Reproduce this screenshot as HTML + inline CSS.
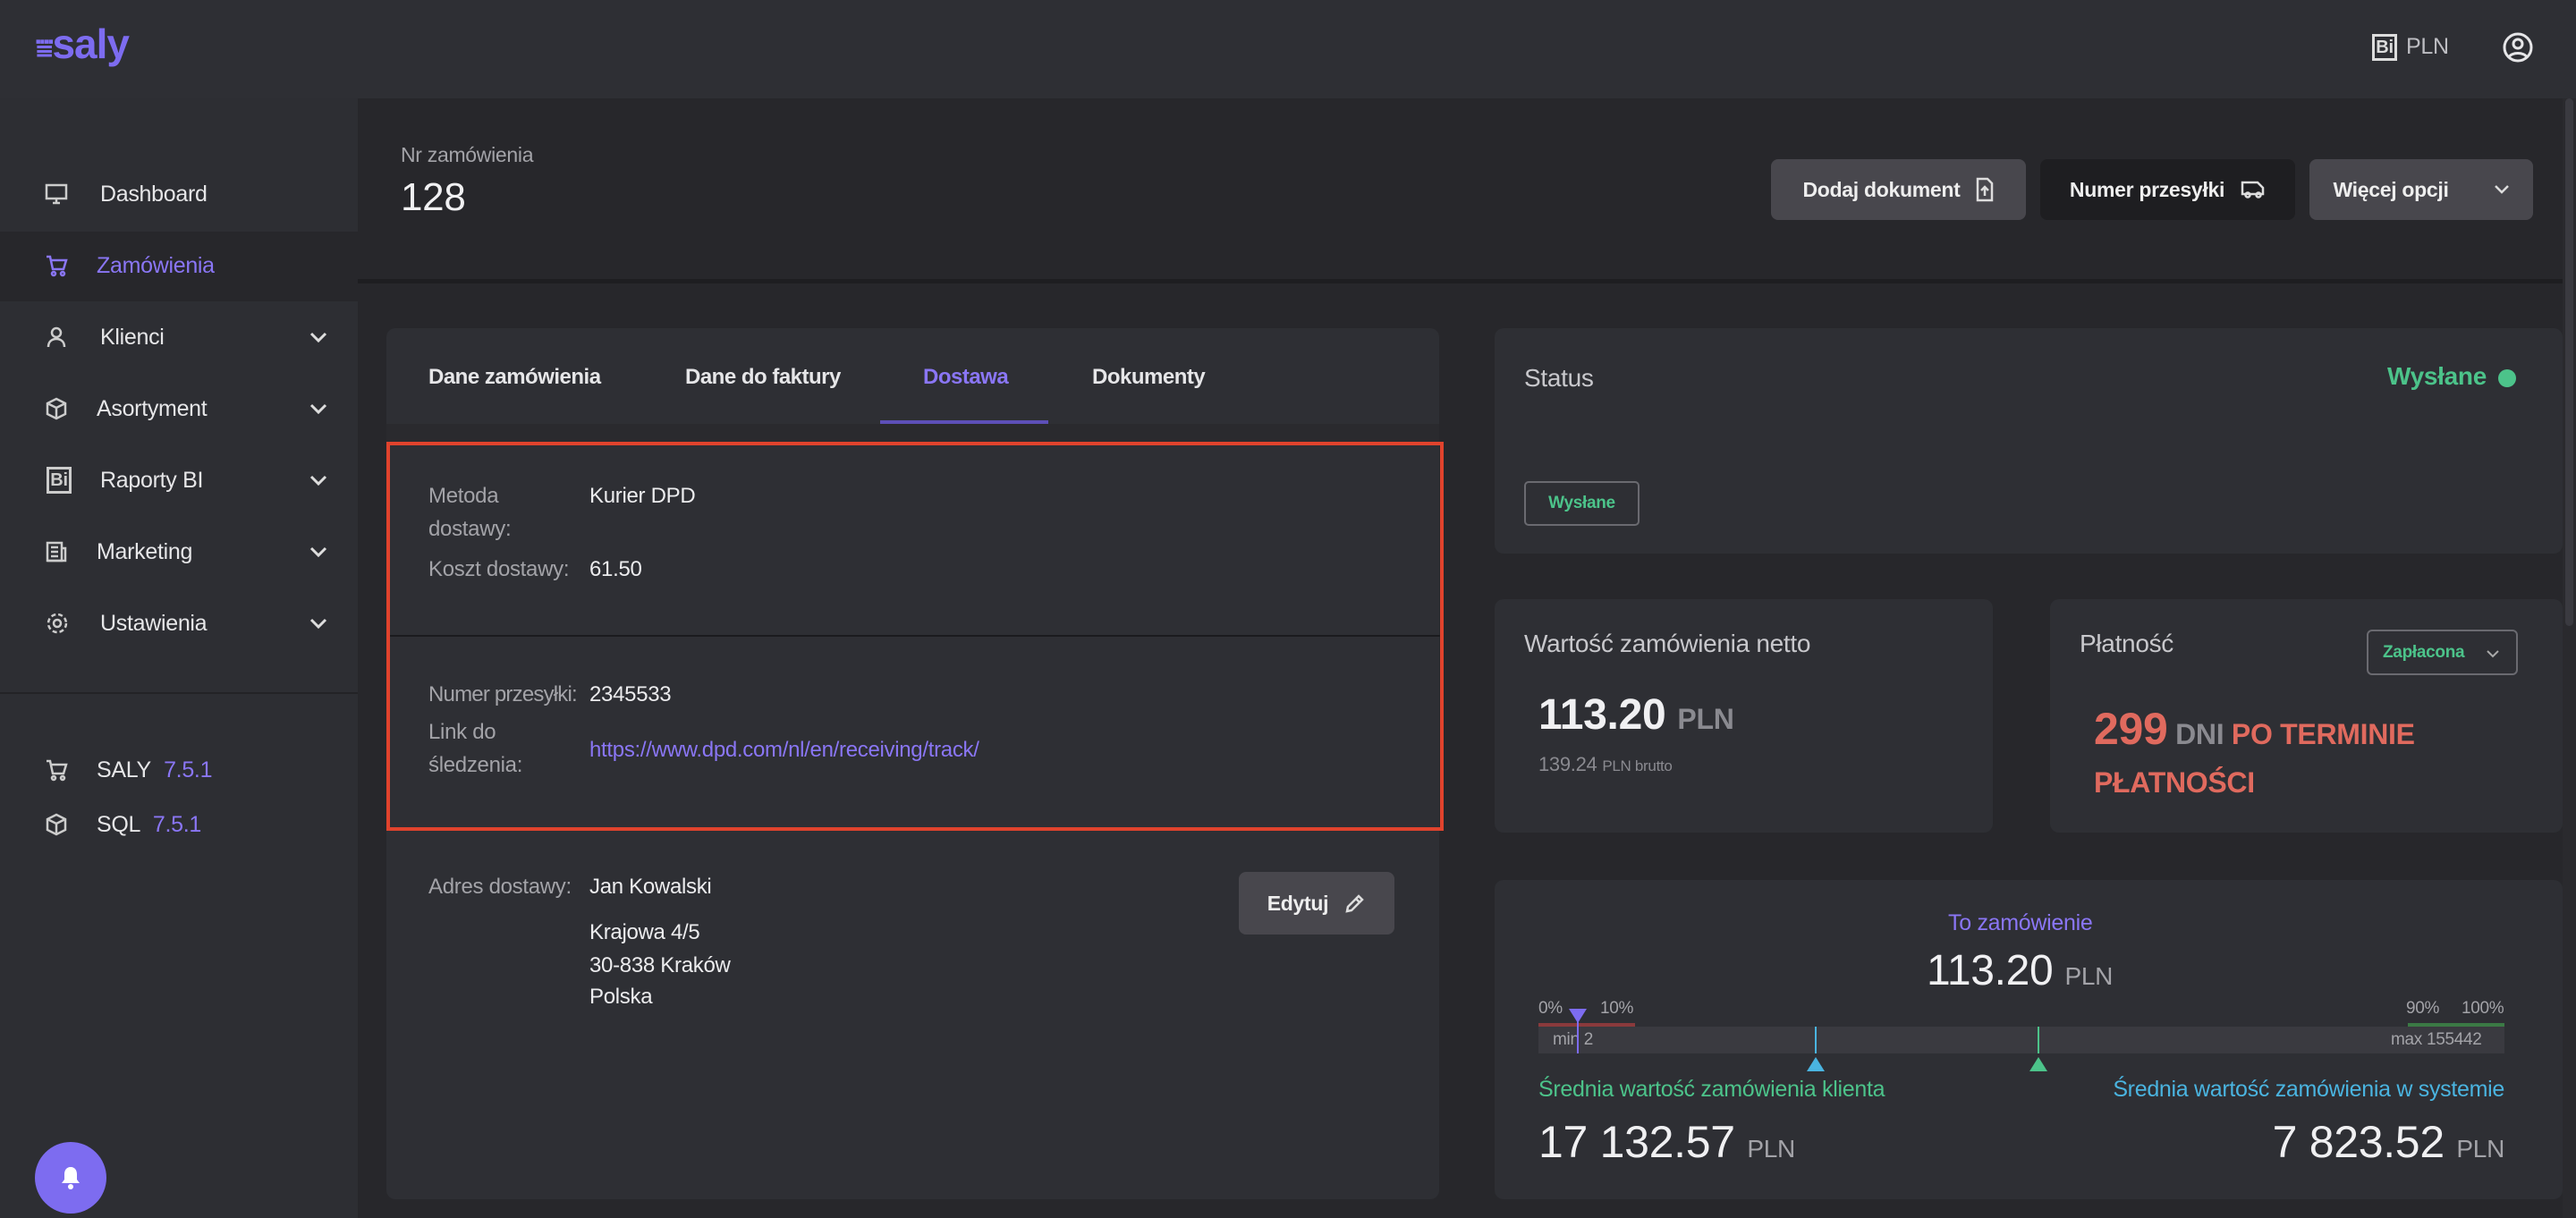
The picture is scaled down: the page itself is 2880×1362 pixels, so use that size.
<!DOCTYPE html>
<html><head><meta charset="utf-8"><style>
*{box-sizing:border-box;margin:0;padding:0}
body{width:2880px;height:1362px;background:#27272b;font-family:"Liberation Sans",sans-serif;color:#e6e6e8;position:relative;overflow:hidden;letter-spacing:-0.3px}
.a{position:absolute;white-space:nowrap}
.top{left:0;top:0;width:2880px;height:110px;background:#2e2f34}
.side{left:0;top:110px;width:400px;height:1252px;background:#2d2e33}
.nav{left:0;width:400px;height:78px;display:flex;align-items:center;font-size:25px;color:#e6e6e8}
.nav svg{position:absolute;left:50px}
.nav span{position:absolute;left:112px}
.chev{position:absolute;left:346px}
.card{background:#2e2f34;border-radius:10px;position:absolute}
.btn{position:absolute;border-radius:8px;font-size:23px;font-weight:bold;display:flex;align-items:center;justify-content:center;gap:18px}
.lbl{color:#a3a3a8;font-size:24px}
.val{color:#ececee;font-size:24px}
.tab{font-size:24px;font-weight:bold;letter-spacing:-0.5px}
</style></head><body>
<div class="a top"></div>
<div class="a" style="left:40px;top:22px;font-size:46px;font-weight:bold;color:#7d6cf0;letter-spacing:-1px"><span style="font-size:32px">⩸</span>saly</div>
<div class="a" style="left:2652px;top:38px;width:28px;height:30px;border:3px solid #ddd;font-size:20px;font-weight:bold;line-height:24px;text-align:center;color:#ddd">Bi</div>
<div class="a" style="left:2690px;top:38px;font-size:25px;color:#bdbdc2">PLN</div>
<svg class="a" style="left:2798px;top:36px" width="34" height="34" viewBox="0 0 34 34" fill="none" stroke="#e6e6e8" stroke-width="3"><circle cx="17" cy="17" r="15"/><circle cx="17" cy="13" r="5"/><path d="M7 28c3-6 17-6 20 0"/></svg>
<div class="a side"></div>
<div class="a" style="left:0;top:259px;width:400px;height:78px;background:#27272b"></div>
<div class="a nav" style="top:178px"><svg width="26" height="26" viewBox="0 0 26 26" fill="none" stroke="#ccc" stroke-width="2.5"><rect x="2" y="3" width="22" height="15"/><path d="M9 23h8M13 18v5"/></svg><span>Dashboard</span></div>
<div class="a nav" style="top:258px;color:#8a76f5"><svg width="26" height="26" viewBox="0 0 26 26" fill="none" stroke="#8a76f5" stroke-width="2.5"><path d="M2 3h4l3 14h12l3-10H8"/><circle cx="10" cy="22" r="2"/><circle cx="20" cy="22" r="2"/></svg><span style="left:108px">Zamówienia</span></div>
<div class="a nav" style="top:338px"><svg width="26" height="26" viewBox="0 0 26 26" fill="none" stroke="#ccc" stroke-width="2.5"><circle cx="13" cy="8" r="5"/><path d="M4 24c0-6 4-9 9-9s9 3 9 9"/></svg><span>Klienci</span><svg class="chev" style="left:346px" width="20" height="12" viewBox="0 0 20 12" fill="none" stroke="#ddd" stroke-width="3"><path d="M2 2l8 8 8-8"/></svg></div>
<div class="a nav" style="top:418px"><svg width="26" height="26" viewBox="0 0 26 26" fill="none" stroke="#ccc" stroke-width="2.5"><path d="M13 2l10 5v12l-10 5-10-5V7zM3 7l10 5 10-5M13 12v12"/></svg><span style="left:108px">Asortyment</span><svg class="chev" style="left:346px" width="20" height="12" viewBox="0 0 20 12" fill="none" stroke="#ddd" stroke-width="3"><path d="M2 2l8 8 8-8"/></svg></div>
<div class="a nav" style="top:498px"><div style="position:absolute;left:52px;width:28px;height:30px;border:3px solid #ccc;font-size:20px;font-weight:bold;line-height:24px;text-align:center;color:#ccc">Bi</div><span>Raporty BI</span><svg class="chev" style="left:346px" width="20" height="12" viewBox="0 0 20 12" fill="none" stroke="#ddd" stroke-width="3"><path d="M2 2l8 8 8-8"/></svg></div>
<div class="a nav" style="top:578px"><svg width="26" height="26" viewBox="0 0 26 26" fill="none" stroke="#ccc" stroke-width="2.5"><rect x="3" y="3" width="16" height="20"/><path d="M19 9h4v14H3M7 8h8M7 13h8M7 18h8"/></svg><span style="left:108px">Marketing</span><svg class="chev" style="left:346px" width="20" height="12" viewBox="0 0 20 12" fill="none" stroke="#ddd" stroke-width="3"><path d="M2 2l8 8 8-8"/></svg></div>
<div class="a nav" style="top:658px"><svg width="28" height="28" viewBox="0 0 28 28" fill="none" stroke="#ccc" stroke-width="2.5"><circle cx="14" cy="14" r="4"/><circle cx="14" cy="14" r="10" stroke-dasharray="5 3"/></svg><span>Ustawienia</span><svg class="chev" style="left:346px" width="20" height="12" viewBox="0 0 20 12" fill="none" stroke="#ddd" stroke-width="3"><path d="M2 2l8 8 8-8"/></svg></div>
<div class="a" style="left:0;top:774px;width:400px;height:2px;background:#232326"></div>
<div class="a nav" style="top:822px"><svg width="26" height="26" viewBox="0 0 26 26" fill="none" stroke="#ccc" stroke-width="2.5"><path d="M2 3h4l3 14h12l3-10H8"/><circle cx="10" cy="22" r="2"/><circle cx="20" cy="22" r="2"/></svg><span style="left:108px">SALY <b style="font-weight:normal;color:#8a76f5;margin-left:8px">7.5.1</b></span></div>
<div class="a nav" style="top:883px"><svg width="26" height="26" viewBox="0 0 26 26" fill="none" stroke="#ccc" stroke-width="2.5"><path d="M13 2l10 5v12l-10 5-10-5V7zM3 7l10 5 10-5M13 12v12"/></svg><span style="left:108px">SQL <b style="font-weight:normal;color:#8a76f5;margin-left:8px">7.5.1</b></span></div>
<div class="a" style="left:39px;top:1277px;width:80px;height:80px;border-radius:50%;background:#7d6cf0"></div>
<svg class="a" style="left:66px;top:1303px" width="26" height="28" viewBox="0 0 26 28" fill="#fff"><path d="M13 2c-5 0-7 4-7 8v6l-3 4h20l-3-4v-6c0-4-2-8-7-8z"/><circle cx="13" cy="24" r="3"/></svg>

<div class="a" style="left:448px;top:160px;font-size:23px;color:#a3a3a8">Nr zamówienia</div>
<div class="a" style="left:448px;top:196px;font-size:44px;color:#f0f0f2">128</div>
<div class="btn" style="left:1980px;top:178px;width:285px;height:68px;background:#48474d;color:#eee">Dodaj dokument <svg width="20" height="28" viewBox="0 0 20 28" fill="none" stroke="#ddd" stroke-width="2.5"><path d="M2 2h11l5 5v19H2zM10 21V11M6 15l4-4 4 4"/></svg></div>
<div class="btn" style="left:2281px;top:178px;width:285px;height:68px;background:#1e1e21;color:#eee">Numer przesyłki <svg width="28" height="22" viewBox="0 0 28 22" fill="none" stroke="#ddd" stroke-width="2.5"><path d="M2 3h17l6 6v7H2z"/><circle cx="8" cy="17" r="2.5"/><circle cx="20" cy="17" r="2.5"/></svg></div>
<div class="btn" style="left:2582px;top:178px;width:250px;height:68px;background:#48474d;color:#eee;gap:50px">Więcej opcji <svg width="18" height="12" viewBox="0 0 18 12" fill="none" stroke="#ddd" stroke-width="2.5"><path d="M2 2l7 7 7-7"/></svg></div>
<div class="a" style="left:400px;top:312px;width:2465px;height:5px;background:#1e1e21"></div>

<div class="card" style="left:432px;top:367px;width:1177px;height:974px"></div>
<div class="a" style="left:432px;top:474px;width:1177px;height:20px;background:#2a2a2e"></div>
<div class="a tab" style="left:479px;top:408px">Dane zamówienia</div>
<div class="a tab" style="left:766px;top:408px">Dane do faktury</div>
<div class="a tab" style="left:1032px;top:408px;color:#8a76f5">Dostawa</div>
<div class="a tab" style="left:1221px;top:408px">Dokumenty</div>
<div class="a" style="left:984px;top:470px;width:188px;height:4px;background:#5d4fb8"></div>
<div class="a" style="left:432px;top:494px;width:1182px;height:435px;border:4px solid #e0432d"></div>
<div class="a" style="left:436px;top:710px;width:1174px;height:2px;background:#1b1b1e"></div>
<div class="a lbl" style="left:479px;top:541px">Metoda</div>
<div class="a lbl" style="left:479px;top:578px">dostawy:</div>
<div class="a val" style="left:659px;top:541px">Kurier DPD</div>
<div class="a lbl" style="left:479px;top:623px">Koszt dostawy:</div>
<div class="a val" style="left:659px;top:623px">61.50</div>
<div class="a lbl" style="left:479px;top:763px;letter-spacing:-0.8px">Numer przesyłki:</div>
<div class="a val" style="left:659px;top:763px">2345533</div>
<div class="a lbl" style="left:479px;top:805px">Link do</div>
<div class="a lbl" style="left:479px;top:842px">śledzenia:</div>
<div class="a" style="left:659px;top:825px;font-size:24px;color:#8a76f5">https://www.dpd.com/nl/en/receiving/track/</div>
<div class="a lbl" style="left:479px;top:978px">Adres dostawy:</div>
<div class="a val" style="left:659px;top:978px">Jan Kowalski</div>
<div class="a val" style="left:659px;top:1029px">Krajowa 4/5</div>
<div class="a val" style="left:659px;top:1066px">30-838 Kraków</div>
<div class="a val" style="left:659px;top:1101px">Polska</div>
<div class="btn" style="left:1385px;top:975px;width:174px;height:70px;background:#48474d;color:#eee">Edytuj <svg width="24" height="24" viewBox="0 0 24 24" fill="none" stroke="#ddd" stroke-width="2.5"><path d="M3 21l1-5L16 4l4 4L8 20zM13 7l4 4"/></svg></div>

<div class="card" style="left:1671px;top:367px;width:1194px;height:252px"></div>
<div class="a" style="left:1704px;top:407px;font-size:28px;color:#c8c8cc">Status</div>
<div class="a" style="left:2669px;top:405px;font-size:28px;font-weight:bold;color:#4cc38a">Wysłane</div>
<div class="a" style="left:2793px;top:413px;width:20px;height:20px;border-radius:50%;background:#4cc38a"></div>
<div class="a" style="left:1704px;top:538px;width:129px;height:50px;border:2px solid #6a6a70;border-radius:5px;font-size:19px;font-weight:bold;color:#4cc38a;text-align:center;line-height:46px">Wysłane</div>

<div class="card" style="left:1671px;top:670px;width:557px;height:261px"></div>
<div class="a" style="left:1704px;top:704px;font-size:28px;color:#c8c8cc">Wartość zamówienia netto</div>
<div class="a" style="left:1720px;top:772px;font-size:48px;font-weight:bold;color:#f0f0f2">113.20 <span style="font-size:32px;color:#8a8a90">PLN</span></div>
<div class="a" style="left:1720px;top:842px;font-size:22px;color:#8a8a90">139.24 <span style="font-size:17px">PLN brutto</span></div>

<div class="card" style="left:2292px;top:670px;width:573px;height:261px"></div>
<div class="a" style="left:2325px;top:704px;font-size:28px;color:#c8c8cc">Płatność</div>
<div class="a" style="left:2646px;top:704px;width:169px;height:51px;border:2px solid #6a6a70;border-radius:6px;font-size:19px;font-weight:bold;color:#4cc38a;padding:13px 0 0 16px">Zapłacona <svg style="position:absolute;right:18px;top:20px" width="16" height="10" viewBox="0 0 16 10" fill="none" stroke="#aaa" stroke-width="2"><path d="M2 2l6 6 6-6"/></svg></div>
<div class="a" style="left:2341px;top:786px;font-size:32px;font-weight:bold;color:#e06a5e"><span style="font-size:50px">299</span> <span style="color:#8a8a90">DNI</span> PO TERMINIE</div>
<div class="a" style="left:2341px;top:857px;font-size:32px;font-weight:bold;color:#e06a5e">PŁATNOŚCI</div>

<div class="card" style="left:1671px;top:984px;width:1194px;height:357px"></div>
<div class="a" style="left:2178px;top:1018px;font-size:25px;color:#8a76f5">To zamówienie</div>
<div class="a" style="left:2154px;top:1058px;font-size:48px;color:#f0f0f2">113.20 <span style="font-size:28px;color:#a3a3a8">PLN</span></div>
<div class="a" style="left:1720px;top:1117px;font-size:19px;color:#a3a3a8">0%</div>
<div class="a" style="left:1789px;top:1117px;font-size:19px;color:#a3a3a8">10%</div>
<div class="a" style="left:2690px;top:1117px;font-size:19px;color:#a3a3a8">90%</div>
<div class="a" style="left:2752px;top:1117px;font-size:19px;color:#a3a3a8">100%</div>
<div class="a" style="left:1720px;top:1144px;width:108px;height:4px;background:#8a3a3c"></div>
<div class="a" style="left:2692px;top:1144px;width:108px;height:4px;background:#3b7a45"></div>
<div class="a" style="left:1720px;top:1148px;width:1080px;height:30px;background:#3a3a40"></div>
<div class="a" style="left:1736px;top:1152px;font-size:19px;color:#a3a3a8">min 2</div>
<div class="a" style="left:2673px;top:1152px;font-size:19px;color:#a3a3a8">max 155442</div>
<div class="a" style="left:1763px;top:1130px;width:2px;height:48px;background:#7d6cf0"></div>
<div class="a" style="left:1754px;top:1128px;width:0;height:0;border-left:10px solid transparent;border-right:10px solid transparent;border-top:16px solid #7d6cf0"></div>
<div class="a" style="left:2029px;top:1148px;width:2px;height:30px;background:#4ab4e0"></div>
<div class="a" style="left:2020px;top:1182px;border-left:10px solid transparent;border-right:10px solid transparent;border-bottom:16px solid #4ab4e0"></div>
<div class="a" style="left:2278px;top:1148px;width:2px;height:30px;background:#4cc38a"></div>
<div class="a" style="left:2269px;top:1182px;border-left:10px solid transparent;border-right:10px solid transparent;border-bottom:16px solid #4cc38a"></div>
<div class="a" style="left:1720px;top:1204px;font-size:25px;color:#4cc38a">Średnia wartość zamówienia klienta</div>
<div class="a" style="right:80px;top:1204px;font-size:25px;color:#4ab4e0">Średnia wartość zamówienia w systemie</div>
<div class="a" style="left:1720px;top:1248px;font-size:50px;color:#f0f0f2">17 132.57 <span style="font-size:28px;color:#a3a3a8">PLN</span></div>
<div class="a" style="right:80px;top:1248px;font-size:50px;color:#f0f0f2">7 823.52 <span style="font-size:28px;color:#a3a3a8">PLN</span></div>
<div class="a" style="left:2865px;top:110px;width:15px;height:1252px;background:#2a2a2e"></div>
<div class="a" style="left:2868px;top:110px;width:9px;height:590px;border-radius:5px;background:#3a3a40"></div>
</body></html>
